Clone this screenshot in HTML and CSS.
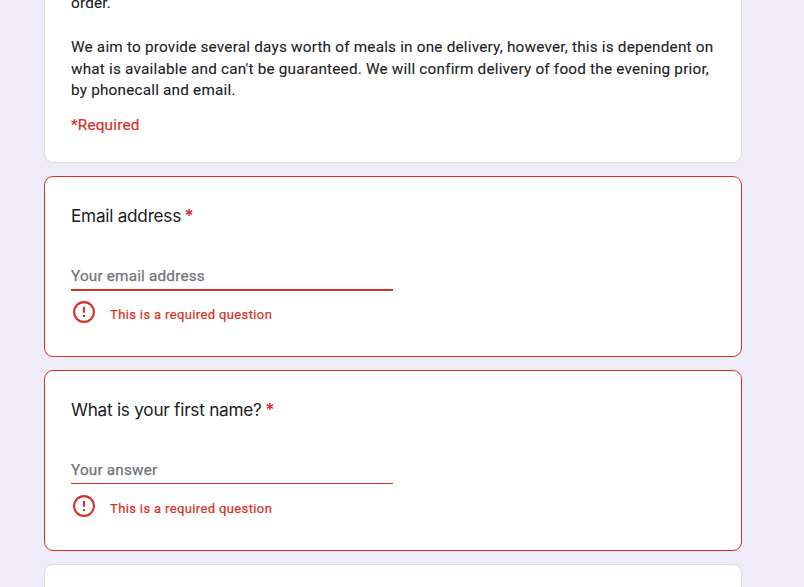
FILE: index.html
```html
<!DOCTYPE html>
<html lang="en">
<head>
<meta charset="utf-8">
<title>Meal order form</title>
<link rel="stylesheet" href="styles.css">
</head>
<body>
<main class="form">
  <section class="card intro">
    <p class="order">order.</p>
    <p class="copy">We aim to provide several days worth of meals in one delivery, however, this is dependent on<br>what is available and can't be guaranteed. We will confirm delivery of food the evening prior,<br>by phonecall and email.</p>
    <p class="required">*Required</p>
  </section>
  <section class="card question error">
    <h2 class="title">Email address <span class="star">*</span></h2>
    <div class="field active">Your email address</div>
    <div class="message">
      <svg class="icon" viewBox="0 0 26 26"><circle cx="13" cy="13" r="9.9"/><path d="M13 7.8v6M13 16v2"/></svg>
      <span>This is a required question</span>
    </div>
  </section>
  <section class="card question error">
    <h2 class="title">What is your first name? <span class="star">*</span></h2>
    <div class="field">Your answer</div>
    <div class="message">
      <svg class="icon" viewBox="0 0 26 26"><circle cx="13" cy="13" r="9.9"/><path d="M13 7.8v6M13 16v2"/></svg>
      <span>This is a required question</span>
    </div>
  </section>
  <section class="card next"></section>
</main>
</body>
</html>
```
FILE: styles.css
```css
* { box-sizing: border-box; }
html, body { margin: 0; height: 100%; overflow: hidden; }
body { background: #f0ebf8; color: #202124; font-family: Roboto, "Liberation Sans", sans-serif; -webkit-text-stroke: .1px currentColor; }
p, h2 { margin: 0; }
.form { width: 698px; margin-left: 44px; height: 587px; overflow: hidden; display: flex; flex-direction: column; gap: 13px; }
.card { background: #fff; border: 1px solid #dadce0; border-radius: 9px; padding: 0 26px; flex: none; }
.intro { height: 163px; border-top: 0; border-radius: 0 0 9px 9px; overflow: hidden; }
.order, .copy { font-size: 15.3px; line-height: 21.6px; letter-spacing: .207px; white-space: nowrap; }
.order { margin-top: -7px; }
.copy { margin-top: 22.35px; }
.required { color: #d93025; font-size: 15.3px; line-height: 22px; letter-spacing: .2px; margin-top: 12.65px; -webkit-text-stroke-width: .22px; }
.question { height: 181px; padding-top: 26px; }
.error { border-color: #d93025; }
.title { font: 400 17.2px/26px Inter, sans-serif; letter-spacing: -.25px; white-space: nowrap; -webkit-text-stroke: 0; }
.star { color: #d93025; font-weight: 600; margin-left: -1px; }
.field { width: 322px; height: 35px; margin-top: 26px; padding-top: 10px; border-bottom: 1px solid #d93025; color: #70757a; font-size: 15.3px; line-height: 22px; letter-spacing: .19px; -webkit-text-stroke: .25px #70757a; }
.active { height: 36px; border-bottom: 2px solid #d93025; }
.message { display: flex; align-items: center; height: 24px; margin-top: 10px; gap: 13px; color: #d93025; font-size: 13px; letter-spacing: .37px; -webkit-text-stroke: .22px #d93025; }
.active + .message { margin-top: 9px; }
.icon { width: 26px; height: 26px; fill: none; stroke: currentColor; stroke-width: 2.1; }
.message span { padding-top: 4px; }
.next { height: 60px; }
```
